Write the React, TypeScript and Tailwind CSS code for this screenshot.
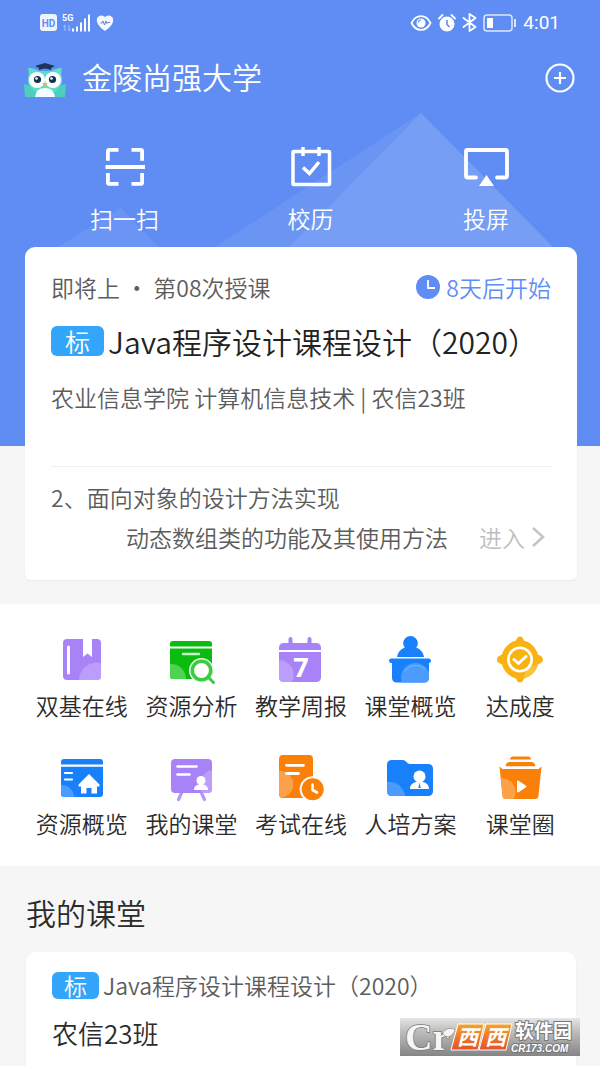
import React from 'react';

const Owl = () => (
    <svg viewBox="0 -4 42 40" className="w-[42px] h-10" aria-hidden="true">
        <path d="M1 35V23c4 1 7 3 9 6h22c2-3 5-5 9-6v12z" fill="#3fcdb9" />
        <path d="M4 6c6 0 9 2 11 3h12c2-1 5-3 11-3-1 4-1 6 0 10 1 9-5 16-17 16S3 25 4 16c1-4 1-6 0-10z" fill="#5fdcc8" />
        <path d="M0 22c6 1 11 5 12 13H1z" fill="#4ccfbd" />
        <path d="M42 22c-6 1-11 5-12 13h11z" fill="#4ccfbd" />
        <path d="M11 35c1-6 4-9 10-9s9 3 10 9z" fill="#f4fdfb" />
        <circle cx="13" cy="18" r="8" fill="#fff" />
        <circle cx="29" cy="18" r="8" fill="#fff" />
        <circle cx="13.500" cy="17.500" r="3.600" fill="#16324f" />
        <circle cx="28.500" cy="17.500" r="3.600" fill="#16324f" />
        <circle cx="12.500" cy="16.500" r="1.300" fill="#fff" />
        <circle cx="27.500" cy="16.500" r="1.300" fill="#fff" />
        <path d="M18.500 21h5L21 25z" fill="#f6b04a" />
        <path d="M11 4l10-3 10 3-4 2v2c-4-2-8-2-12 0V6z" fill="#1d3557" />
    </svg>
);

const StatusBar: React.FC = () => (
    <div className="h-[45px] pl-10 pr-10 flex items-center justify-between text-white">
        <div className="flex items-center">
            <svg viewBox="0 0 18 18" className="w-[18px] h-[18px]">
                <rect width="17" height="17" rx="3" fill="#eef4ff" />
                <text x="8.500" y="12.500" textAnchor="middle" fontFamily="Roboto, sans-serif" fontWeight="700" fontSize="10" fill="#5f8df3">HD</text>
            </svg>
            <svg viewBox="0 0 30 20" className="w-[30px] h-5 ml-1">
                <text x="0" y="8" fontFamily="Roboto, sans-serif" fontWeight="700" fontSize="9" fill="#fff">5G</text>
                <path d="M3 12v6M1.500 14L3 12M7 12v6M8.500 16L7 18" stroke="#a9c3fb" strokeWidth="1" fill="none" />
                <path d="M11 15.500v3M15 13.500v5M19 9.500v9M23 5.500v13M27 1.500v17" stroke="#fff" strokeWidth="2" />
            </svg>
            <svg viewBox="0 0 18 18" className="w-[18px] h-[18px] ml-1">
                <path d="M9 17C5 14 .8 10.500.8 6A4.700 4.700 0 0 1 9 3a4.700 4.700 0 0 1 8.200 3C17.200 10.500 13 14 9 17z" fill="#f4f8ff" />
                <path d="M4.500 9H6l1-2 1.500 4L10 7l1 2.500.8-1H14" stroke="#5f7fe0" strokeWidth="1" fill="none" />
            </svg>
        </div>
        <div className="flex items-center gap-[6px]">
            <svg viewBox="0 0 22 18" className="w-[22px] h-[18px]" fill="none" stroke="#fff">
                <path d="M1.500 9C6-.2 16-.2 20.500 9 16 18.200 6 18.200 1.500 9z" strokeWidth="1.800" />
                <circle cx="11" cy="9" r="4.500" fill="#fff" stroke="none" />
                <path d="M8.500 8.500a2.500 2.500 0 0 1 2.500-2.500" stroke="#5f8df3" strokeWidth="1.200" />
            </svg>
            <svg viewBox="0 0 18 18" className="w-[18px] h-[18px]" fill="none">
                <circle cx="9" cy="10" r="7.500" fill="#fff" />
                <path d="M1 4.500L4.500 1M17 4.500L13.500 1" stroke="#fff" strokeWidth="1.800" strokeLinecap="round" />
                <path d="M9 6v4.500l2.500 2.500" stroke="#5f8df3" strokeWidth="1.600" />
            </svg>
            <svg viewBox="0 0 15 19" className="w-[15px] h-[19px]" fill="none" stroke="#fff" strokeWidth="1.800">
                <path d="M1.500 5l12 9-6 4V1l6 4-12 9" strokeLinejoin="round" strokeLinecap="round" />
            </svg>
            <svg viewBox="0 0 34 18" className="w-[34px] h-[18px]" fill="none">
                <rect x="1" y="1" width="28" height="16" rx="3" stroke="#dbe7ff" strokeWidth="1.500" />
                <rect x="4" y="4" width="6" height="10" fill="#fff" />
                <path d="M32 5v8" stroke="#dbe7ff" strokeWidth="2" />
            </svg>
            <span className="font-['Roboto',sans-serif] font-normal text-[19px] leading-6">4:01</span>
        </div>
    </div>
);

const ScanIcon = () => (
    <svg viewBox="0 0 48 48" className="w-12 h-12" fill="none" stroke="#fff" strokeWidth="3.800">
        <path d="M6.900 17.700V8.400q0-1.500 1.500-1.500h9.100M30.500 6.900h9.100q1.500 0 1.500 1.500v9.300M41.100 30v9.400q0 1.500-1.500 1.500h-9.100M17.500 40.900H8.400q-1.500 0-1.500-1.500V30M4.500 24h39.500" />
    </svg>
);

const CalendarIcon = () => (
    <svg viewBox="0 0 48 48" className="w-12 h-12" fill="none" stroke="#fff" strokeWidth="3.500">
        <rect x="6" y="8.500" width="36.500" height="33" rx="1" />
        <path d="M16 4v9M32 4v9M16 24.500l6.500 6L32 19" />
    </svg>
);

const CastIcon = () => (
    <svg viewBox="0 0 48 48" className="w-12 h-12" fill="none">
        <path d="M14 34.500H5.500Q4 34.500 4 33V8.500Q4 7 5.500 7H43.500Q45 7 45 8.500V33Q45 34.500 43.500 34.500H35" stroke="#fff" strokeWidth="3.800" strokeLinecap="round" />
        <path d="M24.500 32l7.500 11H17z" fill="#fff" />
    </svg>
);

const quickActions = [
    { label: '扫一扫', icon: ScanIcon },
    { label: '校历', icon: CalendarIcon },
    { label: '投屏', icon: CastIcon },
];

const apps = [
    {
        label: '双基在线',
        art: (
            <>
                <path d="M9 3H25V21l4.500-3.500L34 21V3h5q4 0 4 4v33q0 4-4 4H9q-4 0-4-4V7q0-4 4-4z" fill="#a883f8" />
                <path d="M43 27v13q0 4-4 4H21a18 18 0 0 1 22-17z" fill="#bb9dfb" />
                <path d="M10.500 11v26" stroke="#fff" strokeWidth="3" strokeLinecap="round" />
            </>
        ),
    },
    {
        label: '资源分析',
        art: (
            <>
                <path d="M3 10.500V8q0-3 3-3h36q3 0 3 3v2.500z" fill="#0bbb10" />
                <path d="M3 12.500h42V40q0 3-3 3H6q-3 0-3-3z" fill="#0bbb10" />
                <path d="M3 28a15 15 0 0 1 16 15H6q-3 0-3-3z" fill="#4fd353" />
                <path d="M16 18h16" stroke="#c9f5ca" strokeWidth="2.500" strokeLinecap="round" />
                <circle cx="34.500" cy="34.500" r="12.500" fill="#e4fae4" />
                <circle cx="34.500" cy="34.500" r="9.200" fill="#fff" stroke="#3fc944" strokeWidth="3.500" />
                <path d="M41.500 41.500l5 5" stroke="#3fc944" strokeWidth="3" strokeLinecap="round" />
            </>
        ),
    },
    {
        label: '教学周报',
        art: (
            <>
                <path d="M13.500 3v6M32.500 3v6" stroke="#a883f8" strokeWidth="4" strokeLinecap="round" />
                <path d="M2 14v-2q0-5 5-5h32q5 0 5 5v2z" fill="#a883f8" />
                <path d="M2 16h42v25q0 5-5 5H7q-5 0-5-5z" fill="#a883f8" />
                <path d="M2 24a15 15 0 0 1 13 22H7q-5 0-5-5z" fill="#bb9dfb" />
                <text x="24" y="41" textAnchor="middle" fontFamily="'Open Sans', sans-serif" fontWeight="700" fontSize="27" fill="#fff">7</text>
            </>
        ),
    },
    {
        label: '课堂概览',
        art: (
            <>
                <circle cx="23.500" cy="7.300" r="7.300" fill="#1980fb" />
                <path d="M10 21c1-6 5-9 10-10h7c5 1 9 4 10 10z" fill="#1980fb" />
                <rect x="2" y="22.500" width="42" height="4.500" rx="2.200" fill="#1980fb" />
                <path d="M5 25h37v16.500q0 5-5 5H10q-5 0-5-5z" fill="#1980fb" />
                <path d="M15 46.500a14 14 0 0 1 27-10v5q0 5-5 5z" fill="#4b9cfe" />
                <path d="M17 36a14 14 0 0 1 21-3" stroke="#82bbff" strokeWidth=".8" fill="none" />
            </>
        ),
    },
    {
        label: '达成度',
        art: (
            <>
                <path d="M24 .5c2.500 0 3 2 4 4 7 2 12 7 14 14 2 1 5 2 5 5s-3 4-5 5c-2 7-7 12-14 14-1 2-1.500 4-4 4s-3-2-4-4c-7-2-12-7-14-14-2-1-5-2-5-5s3-4 5-5c2-7 7-12 14-14 1-2 1.500-4 4-4z" fill="#f8b313" />
                <path d="M42 28.500c-2 7-7 12-14 14 0-7 6-13 14-14z" fill="#fbc440" />
                <circle cx="24" cy="23.500" r="11.700" fill="none" stroke="#fff" strokeWidth="2.600" />
                <path d="M18 23.500l4.500 4 7.500-7" fill="none" stroke="#fff" strokeWidth="3" strokeLinecap="round" strokeLinejoin="round" />
            </>
        ),
    },
    {
        label: '资源概览',
        art: (
            <>
                <path d="M3 10.500V8q0-3 3-3h36q3 0 3 3v2.500z" fill="#1980fb" />
                <path d="M3 12.800h42V40q0 3-3 3H6q-3 0-3-3z" fill="#1980fb" />
                <path d="M3 31a12.500 12.500 0 0 1 13 12H6q-3 0-3-3z" fill="#4b9cfe" />
                <path d="M7 19h7M7 25.500h7" stroke="#fff" strokeWidth="2.200" strokeLinecap="round" />
                <path d="M31 20l10.500 10.500v2H39v7h-5.500V34h-5v5.500H23v-7h-2.500v-2z" fill="#fff" />
            </>
        ),
    },
    {
        label: '我的课堂',
        art: (
            <>
                <path d="M15 38l-3.500 7.500M34 38l3.500 7.500" stroke="#b496fa" strokeWidth="3.200" strokeLinecap="round" />
                <rect x="4" y="5" width="41" height="34" rx="4" fill="#a883f8" />
                <path d="M45 16v19q0 4-4 4h-6a15 15 0 0 1 10-23z" fill="#bb9dfb" />
                <path d="M10.500 12.500h19M10.500 20.500h12" stroke="#fff" strokeWidth="2.600" strokeLinecap="round" />
                <circle cx="34" cy="26.500" r="4.500" fill="#fff" />
                <path d="M32 29h4v1.500c3 .5 5 2 5 5.500H27c0-3.500 2-5 5-5.500z" fill="#fff" />
            </>
        ),
    },
    {
        label: '考试在线',
        art: (
            <>
                <rect x="2" y="1" width="34" height="43" rx="4" fill="#fb8007" />
                <path d="M2 17a13 13 0 0 1 2 26.500q-2-1-2-3.500z" fill="#fda04a" />
                <path d="M9.500 11.300h17M9.500 19.500h12" stroke="#fff" strokeWidth="2.800" strokeLinecap="round" />
                <circle cx="35.700" cy="35.300" r="13" fill="#fff" />
                <circle cx="35.700" cy="35.300" r="11" fill="#fb8007" />
                <path d="M35.500 30.500v5.500l4.500 2.500" fill="none" stroke="#fff" strokeWidth="2.600" strokeLinecap="round" strokeLinejoin="round" />
            </>
        ),
    },
    {
        label: '人培方案',
        art: (
            <>
                <path d="M5 6h11c3 0 4 4 7 4h18q5 0 5 5v22q0 5-5 5H5q-5 0-5-5V11q0-5 5-5z" fill="#1980fb" />
                <path d="M0 28a16 16 0 0 1 18 14H5q-5 0-5-5z" fill="#4b9cfe" />
                <circle cx="32.500" cy="22.500" r="6" fill="#fff" />
                <path d="M29.500 26h6v2c4 .5 6.500 3 6.500 7H23c0-4 2.500-6.500 6.500-7z" fill="#fff" />
                <path d="M32.500 28.500l1.200 5.500h-2.400z" fill="#1980fb" />
            </>
        ),
    },
    {
        label: '课堂圈',
        art: (
            <>
                <path d="M14 5q.5-2.500 2.500-2.500h16q2 0 2.500 2.500v.5H14zM9.500 12.500q.5-4.500 4-4.500h22q3.500 0 4 4.500z" fill="#fb8007" />
                <path d="M3.500 12.500l3 2.500h36l3-2.500L42.500 42q-.5 3-3.500 3H10q-3 0-3.500-3z" fill="#fb8007" />
                <path d="M7 13.600h35" stroke="#fff" strokeWidth="2.200" />
                <path d="M4.700 24a14 14 0 0 1 12.800 21H10q-3 0-3.500-3z" fill="#fda04a" />
                <path d="M22 27.500l7.500 5-7.500 5z" fill="#fff" stroke="#fff" strokeWidth="2" strokeLinejoin="round" />
            </>
        ),
    },
];

const Watermark = () => (
    <div className="absolute right-5 bottom-[10px] w-[180px]">
        <svg viewBox="0 0 180 38" className="w-full overflow-visible">
            <defs>
                <linearGradient id="plate" x1="0" y1="0" x2="0" y2="1">
                    <stop offset="0" stopColor="#e6e6e6" />
                    <stop offset="0.300" stopColor="#c2c2c2" />
                    <stop offset="1" stopColor="#858585" />
                </linearGradient>
                <linearGradient id="flame" x1="0" y1="0" x2="0" y2="1">
                    <stop offset="0" stopColor="#f7a428" />
                    <stop offset="1" stopColor="#e4502a" />
                </linearGradient>
            </defs>
            <rect width="180" height="38" fill="url(#plate)" />
            <g fill="#f6f6f6" stroke="#777" strokeWidth="1.500" paintOrder="stroke">
                <text x="5" y="32" fontFamily="'Liberation Serif', serif" fontWeight="700" fontSize="38">Cr</text>
                <path d="M43 15c4-5 7-5 12-3-3 6-7 8-11 5z" strokeWidth="1" />
            </g>
            <path d="M58 6h26l-6 26H51zM86 6h26l-6 26H79z" fill="url(#flame)" stroke="#fff" strokeWidth="1" />
            <g fontFamily="'Noto Sans CJK SC', sans-serif" fontWeight="700" fill="#fff">
                <text x="57" y="27" fontSize="21" fontStyle="italic">西</text>
                <text x="85" y="27" fontSize="21" fontStyle="italic">西</text>
                <g stroke="#777" strokeWidth="2" paintOrder="stroke">
                    <text x="115" y="20" fontSize="19">软件园</text>
                    <text x="111" y="34" fontSize="10" fontStyle="italic" fontFamily="'Liberation Sans', sans-serif">CR173.COM</text>
                </g>
            </g>
        </svg>
    </div>
);

const App: React.FC = () => (
    <div className="relative min-h-screen flex flex-col bg-[#f6f6f6] font-['Noto_Sans_CJK_SC',sans-serif] font-[350] text-[23px] leading-8 text-[#2b2b2b]">
        <header className="relative bg-[#5f8df3] text-white pb-[199px]">
            {/* Mountains behind the shortcuts */}
            <svg viewBox="0 0 600 134" className="absolute left-0 bottom-[199px] w-full" aria-hidden="true">
                <path d="M121 95L58 134h100z" fill="#fff" fillOpacity=".08" />
                <path d="M421 0L215 134h74z" fill="#fff" fillOpacity=".07" />
                <path d="M421 0L289 134h264z" fill="#fff" fillOpacity=".15" />
            </svg>
            <div className="relative">
                <StatusBar />
                <div className="h-[66px] pl-6 pr-[25px] flex items-center">
                    <Owl />
                    <h1 className="ml-4 pb-1 flex-1 text-[30px] leading-10">金陵尚强大学</h1>
                    <button aria-label="添加">
                        <svg viewBox="0 0 30 30" className="w-[30px] h-[30px]" fill="none" stroke="#fff" strokeWidth="2.200">
                            <circle cx="15" cy="15" r="13.500" />
                            <path d="M15 9v12M9 15h12" />
                        </svg>
                    </button>
                </div>
                <nav className="h-[136px] pt-8 px-[90px] flex justify-between items-start">
                    {quickActions.map(({ label, icon: Icon }) => (
                        <button key={label} className="flex flex-col items-center gap-[11px]">
                            <Icon />
                            <span>{label}</span>
                        </button>
                    ))}
                </nav>
            </div>
        </header>

        <section className="relative -mt-[199px] ml-[25px] mr-[23px] mb-6 px-[26px] pt-6 pb-[27px] bg-white rounded-t-[10px] rounded-b-md shadow-xs text-[#5c5c5c]">
            <div className="flex items-center justify-between">
                <span>即将上 ・ 第08次授课</span>
                <span className="flex items-center gap-[6px] text-[#5f8df3]">
                    <svg viewBox="0 0 24 24" className="w-6 h-6" fill="none">
                        <circle cx="12" cy="12" r="12" fill="#5f8df3" />
                        <path d="M12 5v8h7" stroke="#fff" strokeWidth="1.800" />
                    </svg>
                    8天后开始
                </span>
            </div>
            <h2 className="mt-[18px] flex items-center gap-1 text-[30px] leading-10 text-[#222]">
                <span className="w-[53px] h-[30px] rounded-md bg-[#33a6fb] text-white text-[25px] leading-[30px] text-center">标</span>
                Java程序设计课程设计（2020）
            </h2>
            <p className="mt-5">农业信息学院 计算机信息技术 | 农信23班</p>
            <div className="mt-[53px] pt-[14px] border-t border-[#f0f0f0]">
                <p>2、面向对象的设计方法实现</p>
                <div className="mt-2 flex items-center justify-between">
                    <p className="pl-[75px]">动态数组类的功能及其使用方法</p>
                    <a href="#enter" className="flex items-center gap-[6px] pr-[6px] text-[#bebebe]">
                        进入
                        <svg viewBox="0 0 14 22" className="w-[14px] h-[22px]" fill="none" stroke="#c4c4c4" strokeWidth="2.500">
                            <path d="M2 2l10 9-10 9" />
                        </svg>
                    </a>
                </div>
            </div>
        </section>

        <nav className="bg-white pt-8 pb-4 pl-[27px] pr-[25px] grid grid-cols-5 gap-y-[22px]">
            {apps.map(({ label, art }) => (
                <button key={label} className="flex flex-col items-center gap-[5px] pb-[11px] whitespace-nowrap">
                    <svg viewBox="0 0 48 48" className="w-12 h-12 overflow-visible">{art}</svg>
                    <span>{label}</span>
                </button>
            ))}
        </nav>

        <main className="flex-1 flex flex-col pt-[26px] pl-[26px] pr-6">
            <h2 className="text-[30px] leading-10">我的课堂</h2>
            <article className="mt-5 flex-1 px-[26px] pt-[17px] pb-4 bg-white rounded-t-[10px] shadow-xs">
                <p className="flex items-center gap-1 text-[#5c5c5c]">
                    <span className="w-[47px] h-[27px] rounded-md bg-[#33a6fb] text-white leading-[27px] text-center">标</span>
                    Java程序设计课程设计（2020）
                </p>
                <h3 className="mt-4 text-[26px] leading-8">农信23班</h3>
            </article>
        </main>
        <Watermark />
    </div>
);

export default App;
